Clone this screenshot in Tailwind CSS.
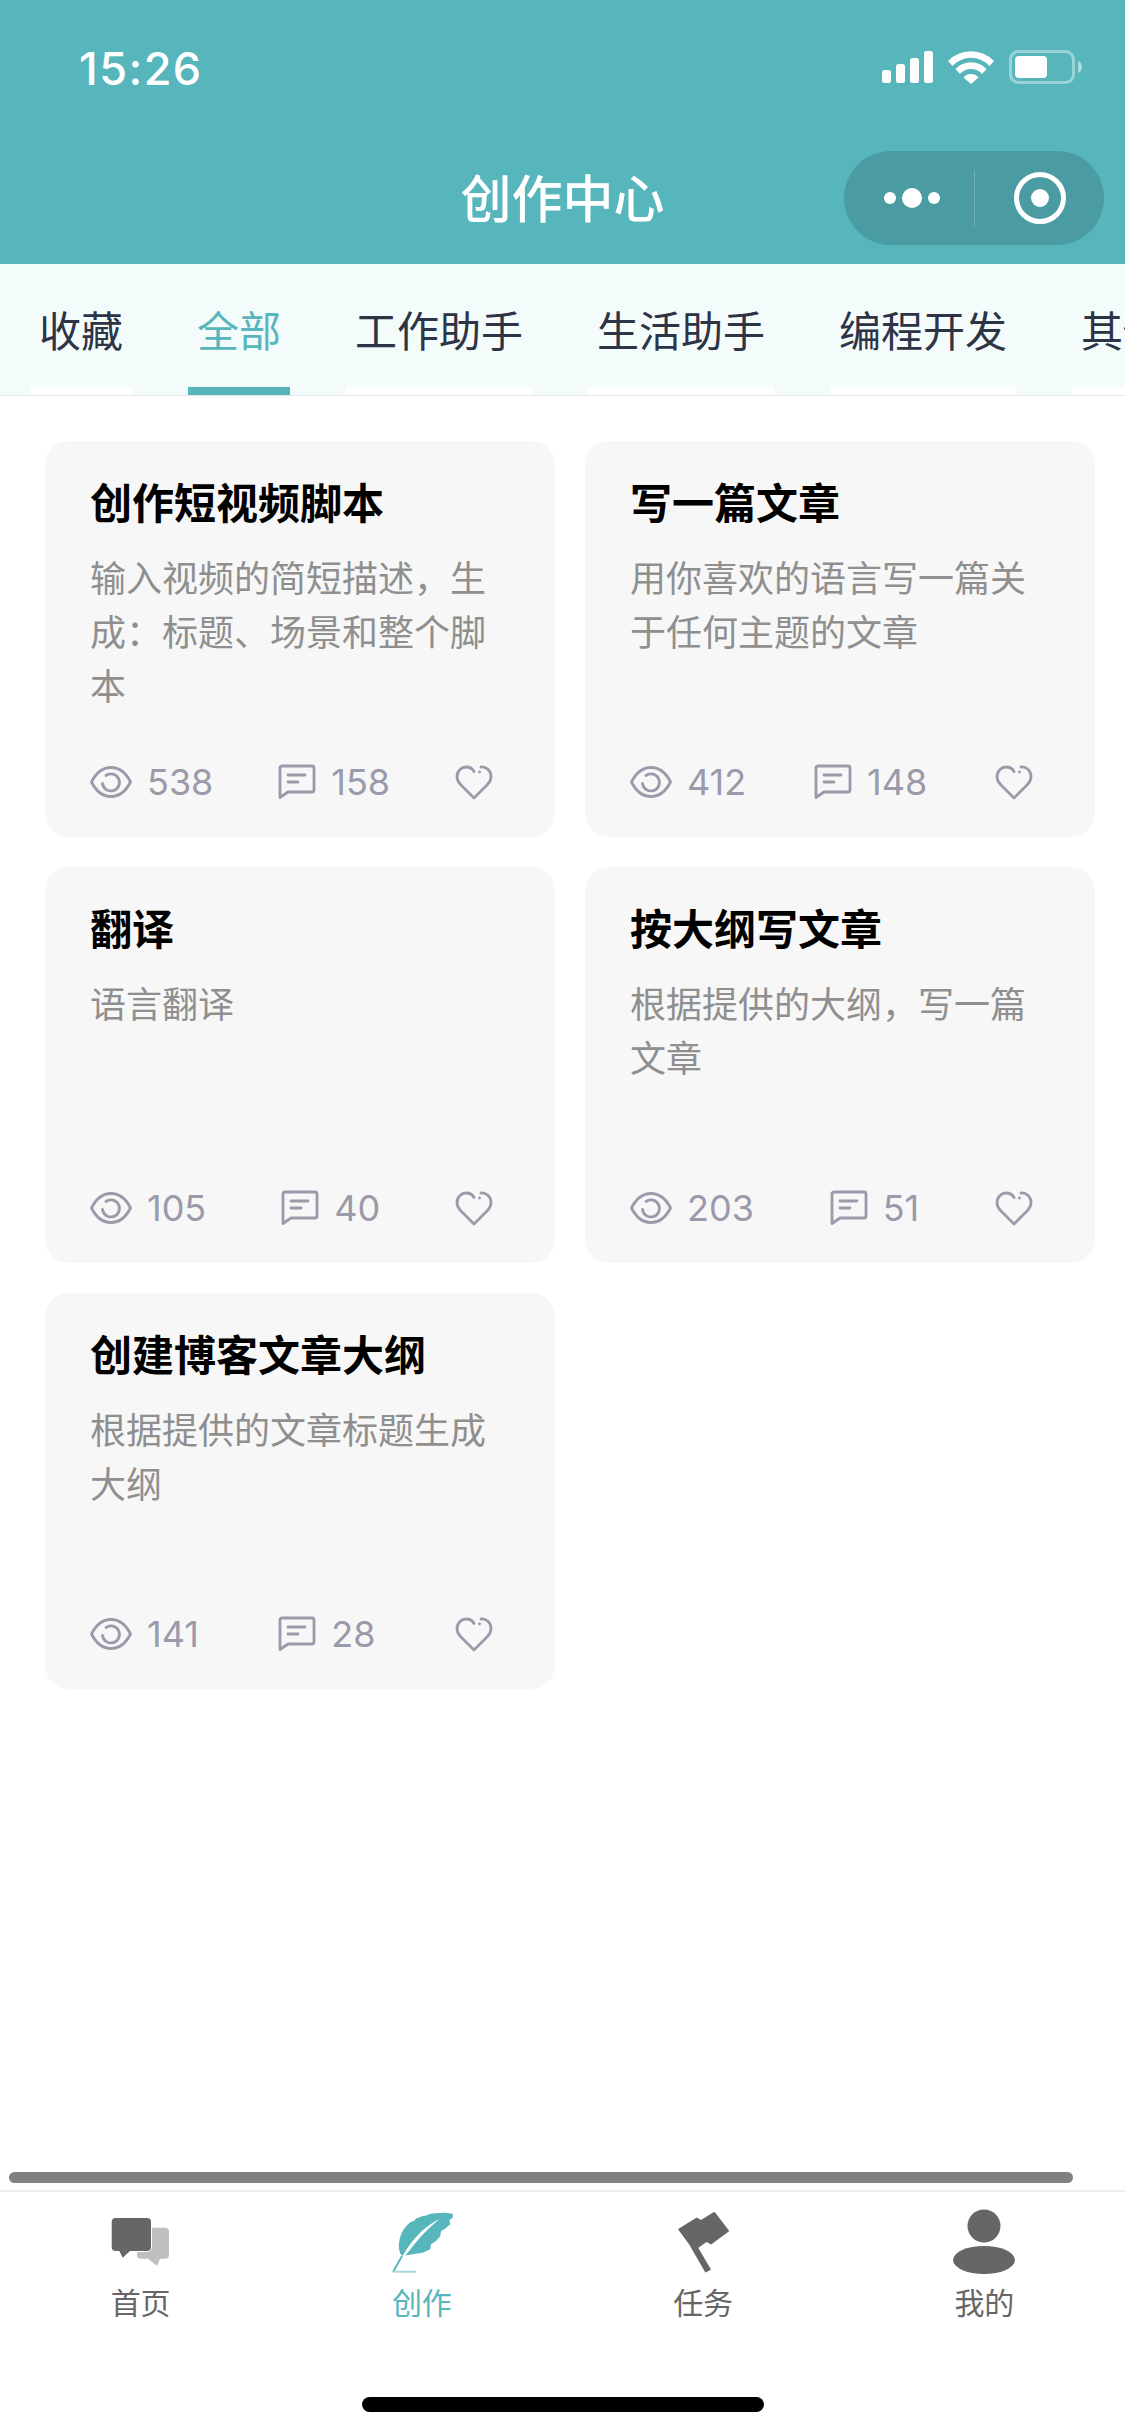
<!DOCTYPE html>
<html lang="zh">
<head>
    <meta charset="UTF-8">
    <meta name="viewport" content="width=device-width, initial-scale=1.0">
    <title>创作中心</title>
    <script src="https://cdn.jsdelivr.net/npm/@tailwindcss/browser@4"></script>
</head>
<body class="bg-white font-['Noto_Sans_CJK_SC',sans-serif]">
    <svg class="hidden">
        <symbol id="eye" viewBox="0 0 42 34">
            <path d="M1.500 17C6 8 13 2.500 21 2.500S36 8 40.500 17C36 26 29 31.500 21 31.500S6 26 1.500 17z" fill="none" stroke="currentColor" stroke-width="2.800" stroke-linejoin="round"/>
            <path d="M16 10.500a8.500 8.500 0 1 1-3.500 8" fill="none" stroke="currentColor" stroke-width="2.800" stroke-linecap="round"/>
        </symbol>
        <symbol id="comment" viewBox="0 0 38 36">
            <path d="M2 33.500V4a2 2 0 0 1 2-2h30a2 2 0 0 1 2 2v22a2 2 0 0 1-2 2H10z" fill="none" stroke="currentColor" stroke-width="2.800" stroke-linejoin="round"/>
            <path d="M10 11h17M10 18h10" fill="none" stroke="currentColor" stroke-width="2.800" stroke-linecap="round"/>
        </symbol>
        <symbol id="heart" viewBox="0 0 38 36">
            <path d="M26 3c5-.5 10 3.500 10 9.500 0 3-1 5.500-3.500 8L19 34 5.500 20.500C3 18 2 15.500 2 12.500 2 7 6.500 3 11 3c3.500 0 6.500 1.500 8 4.500" fill="none" stroke="currentColor" stroke-width="2.800" stroke-linecap="round" stroke-linejoin="round"/>
            <circle cx="24.500" cy="8" r="1.400" fill="currentColor"/>
        </symbol>
    </svg>

    <div class="w-[1125px] h-[2436px] flex flex-col overflow-hidden">
        <!-- header -->
        <div class="h-[264px] bg-[#56b6bc] text-white shrink-0">
            <div class="h-[136px] flex items-center justify-between pl-[79px] pr-[43px]">
                <span class="font-['Inter',sans-serif] text-[45px] tracking-[1.500px] font-medium pt-[2px]">15:26</span>
                <svg width="200" height="36" viewBox="0 0 200 36">
                    <rect x="0" y="20" width="9" height="13" rx="2.500" fill="#fff"/>
                    <rect x="14" y="14" width="9" height="19" rx="2.500" fill="#fff"/>
                    <rect x="28" y="8" width="9" height="25" rx="2.500" fill="#fff"/>
                    <rect x="42" y="1" width="9" height="32" rx="2.500" fill="#fff"/>
                    <path d="M66 11a32 32 0 0 1 46 0l-4.500 5a25 25 0 0 0-37 0z" fill="#fff"/>
                    <path d="M73.500 19a21 21 0 0 1 31 0l-4.500 5a14.500 14.500 0 0 0-22 0z" fill="#fff"/>
                    <path d="M81.500 27.500a10 10 0 0 1 15 0L89 34z" fill="#fff"/>
                    <rect x="128.500" y="1.500" width="63" height="31" rx="8" fill="none" stroke="#fff" stroke-opacity=".4" stroke-width="3"/>
                    <rect x="133" y="6" width="32" height="22" rx="4" fill="#fff"/>
                    <path d="M196 11c3 1 4 3.500 4 6s-1 5-4 6z" fill="#fff" fill-opacity=".5"/>
                </svg>
            </div>
            <div class="relative mt-[15px] h-[94px] flex items-center justify-center">
                <span class="text-[51px] font-medium leading-none pb-[4px]">创作中心</span>
                <div class="absolute right-[21px] top-0 w-[260px] h-[94px] rounded-full bg-[#4a9ca2]">
                    <svg width="260" height="94" viewBox="0 0 260 94">
                        <circle cx="46" cy="47" r="6" fill="#fff"/>
                        <circle cx="68" cy="47" r="10" fill="#fff"/>
                        <circle cx="90" cy="47" r="6" fill="#fff"/>
                        <path d="M130.500 19v56" stroke="#fff" stroke-opacity=".2"/>
                        <circle cx="196" cy="47" r="23.500" fill="none" stroke="#fff" stroke-width="5"/>
                        <circle cx="196" cy="47" r="9" fill="#fff"/>
                    </svg>
                </div>
            </div>
        </div>

        <!-- tabs -->
        <div class="h-[132px] shrink-0 bg-[#f4fbfb] border-b border-[#e8e8e8] flex pl-[30px] gap-[56px] overflow-hidden text-[42px] text-[#2c3445]">
            <div class="shrink-0 flex flex-col">
                <span class="h-[123px] px-[9px] pt-[6px] flex items-center leading-none">收藏</span>
                <span class="h-[8px] bg-white"></span>
            </div>
            <div class="shrink-0 flex flex-col text-[#56b6bc]">
                <span class="h-[123px] px-[9px] pt-[6px] flex items-center leading-none">全部</span>
                <span class="h-[8px] bg-[#56b6bc]"></span>
            </div>
            <div class="shrink-0 flex flex-col">
                <span class="h-[123px] px-[9px] pt-[6px] flex items-center leading-none">工作助手</span>
                <span class="h-[8px] bg-white"></span>
            </div>
            <div class="shrink-0 flex flex-col">
                <span class="h-[123px] px-[9px] pt-[6px] flex items-center leading-none">生活助手</span>
                <span class="h-[8px] bg-white"></span>
            </div>
            <div class="shrink-0 flex flex-col">
                <span class="h-[123px] px-[9px] pt-[6px] flex items-center leading-none">编程开发</span>
                <span class="h-[8px] bg-white"></span>
            </div>
            <div class="shrink-0 flex flex-col">
                <span class="h-[123px] px-[9px] pt-[6px] flex items-center leading-none">其他</span>
                <span class="h-[8px] bg-white"></span>
            </div>
        </div>

        <!-- cards -->
        <div class="flex-1 grid grid-cols-[510px_510px] auto-rows-[396px] gap-[30px] pl-[45px] pt-[45px]">
            <div class="bg-[#f7f7f7] rounded-[24px] pl-[45px] pr-[62px] pt-[37px] pb-[35px] flex flex-col">
                <h3 class="text-[42px] leading-[46px] font-bold text-black whitespace-nowrap">创作短视频脚本</h3>
                <p class="mt-[25px] -mr-[22px] text-[36px] leading-[54px] text-[#8f8f8f]">输入视频的简短描述，生成：标题、场景和整个脚本</p>
                <div class="mt-auto flex items-center justify-between h-[40px] text-[#9a9aaa] text-[36px] font-['Inter',sans-serif] font-normal">
                    <span class="flex items-center gap-[15px]"><svg class="w-[42px] h-[34px]"><use href="#eye"/></svg>538</span>
                    <span class="flex items-center gap-[15px]"><svg class="w-[38px] h-[36px]"><use href="#comment"/></svg>158</span>
                    <svg class="w-[38px] h-[36px]"><use href="#heart"/></svg>
                </div>
            </div>
            <div class="bg-[#f7f7f7] rounded-[24px] pl-[45px] pr-[62px] pt-[37px] pb-[35px] flex flex-col">
                <h3 class="text-[42px] leading-[46px] font-bold text-black whitespace-nowrap">写一篇文章</h3>
                <p class="mt-[25px] -mr-[22px] text-[36px] leading-[54px] text-[#8f8f8f]">用你喜欢的语言写一篇关于任何主题的文章</p>
                <div class="mt-auto flex items-center justify-between h-[40px] text-[#9a9aaa] text-[36px] font-['Inter',sans-serif] font-normal">
                    <span class="flex items-center gap-[15px]"><svg class="w-[42px] h-[34px]"><use href="#eye"/></svg>412</span>
                    <span class="flex items-center gap-[15px]"><svg class="w-[38px] h-[36px]"><use href="#comment"/></svg>148</span>
                    <svg class="w-[38px] h-[36px]"><use href="#heart"/></svg>
                </div>
            </div>
            <div class="bg-[#f7f7f7] rounded-[24px] pl-[45px] pr-[62px] pt-[37px] pb-[35px] flex flex-col">
                <h3 class="text-[42px] leading-[46px] font-bold text-black whitespace-nowrap">翻译</h3>
                <p class="mt-[25px] -mr-[22px] text-[36px] leading-[54px] text-[#8f8f8f]">语言翻译</p>
                <div class="mt-auto flex items-center justify-between h-[40px] text-[#9a9aaa] text-[36px] font-['Inter',sans-serif] font-normal">
                    <span class="flex items-center gap-[15px]"><svg class="w-[42px] h-[34px]"><use href="#eye"/></svg>105</span>
                    <span class="flex items-center gap-[15px]"><svg class="w-[38px] h-[36px]"><use href="#comment"/></svg>40</span>
                    <svg class="w-[38px] h-[36px]"><use href="#heart"/></svg>
                </div>
            </div>
            <div class="bg-[#f7f7f7] rounded-[24px] pl-[45px] pr-[62px] pt-[37px] pb-[35px] flex flex-col">
                <h3 class="text-[42px] leading-[46px] font-bold text-black whitespace-nowrap">按大纲写文章</h3>
                <p class="mt-[25px] -mr-[22px] text-[36px] leading-[54px] text-[#8f8f8f]">根据提供的大纲，写一篇文章</p>
                <div class="mt-auto flex items-center justify-between h-[40px] text-[#9a9aaa] text-[36px] font-['Inter',sans-serif] font-normal">
                    <span class="flex items-center gap-[15px]"><svg class="w-[42px] h-[34px]"><use href="#eye"/></svg>203</span>
                    <span class="flex items-center gap-[15px]"><svg class="w-[38px] h-[36px]"><use href="#comment"/></svg>51</span>
                    <svg class="w-[38px] h-[36px]"><use href="#heart"/></svg>
                </div>
            </div>
            <div class="bg-[#f7f7f7] rounded-[24px] pl-[45px] pr-[62px] pt-[37px] pb-[35px] flex flex-col">
                <h3 class="text-[42px] leading-[46px] font-bold text-black whitespace-nowrap">创建博客文章大纲</h3>
                <p class="mt-[25px] -mr-[22px] text-[36px] leading-[54px] text-[#8f8f8f]">根据提供的文章标题生成大纲</p>
                <div class="mt-auto flex items-center justify-between h-[40px] text-[#9a9aaa] text-[36px] font-['Inter',sans-serif] font-normal">
                    <span class="flex items-center gap-[15px]"><svg class="w-[42px] h-[34px]"><use href="#eye"/></svg>141</span>
                    <span class="flex items-center gap-[15px]"><svg class="w-[38px] h-[36px]"><use href="#comment"/></svg>28</span>
                    <svg class="w-[38px] h-[36px]"><use href="#heart"/></svg>
                </div>
            </div>
        </div>

        <!-- scrollbar -->
        <div class="h-[18px] shrink-0 pl-[9px]">
            <div class="w-[1064px] h-[11px] rounded-full bg-[#808080]"></div>
        </div>

        <!-- bottom nav -->
        <div class="h-[246px] shrink-0 border-t-2 border-[#ececec] pt-[17px] grid grid-cols-4 text-[30px] text-[#666] relative">
            <div class="flex flex-col items-center">
                <svg width="66" height="66" viewBox="0 0 66 66" class="-translate-x-[1px]">
                    <path d="M34 18.700h24a4 4 0 0 1 4 4v23a4 4 0 0 1-4 4h-5l-3 7-9-7H34a4 4 0 0 1-4-4z" fill="#bfbfbf"/>
                    <path d="M8.700 9H40a4 4 0 0 1 4 4v25a4 4 0 0 1-4 4H23l-7.300 6.700L12.300 42H8.700a4 4 0 0 1-4-4V13a4 4 0 0 1 4-4z" fill="#666" stroke="#fff" stroke-width="2" paint-order="stroke"/>
                </svg>
                <span class="mt-[5px] leading-[42px]">首页</span>
            </div>
            <div class="flex flex-col items-center text-[#56b6bc]">
                <svg width="66" height="66" viewBox="0 0 66 66">
                    <path d="M11.300 44.700C9.500 40 9.500 36 10.300 32c.7-4 1.700-7 3.400-10 2-3.500 5-6.800 8.300-9.300l3-.7 2-2.500 6.700-2.500 4-.5 2-1.300 6-1 10-.5 8 1v4l-3.400 2.600 1 4-6 5-3.300 1.700-.7 5L47 32l-5 3.300-.7 5-7.600 3.400-10 1.600-10 1.700z" fill="#56b6bc"/>
                    <path d="M13 48C22 32 34 18 50.500 10 38 20 27 32 17 46z" fill="#fff"/>
                    <path d="M13 47 4 63" stroke="#56b6bc" stroke-width="2" fill="none"/>
                    <path d="M4 62.700h23" stroke="#a5dadd" stroke-width="2" fill="none"/>
                </svg>
                <span class="mt-[5px] leading-[42px]">创作</span>
            </div>
            <div class="flex flex-col items-center">
                <svg width="66" height="66" viewBox="0 0 66 66">
                    <path d="M9 20.300 26.700 9.300 31 12 44.300 3.700 58.300 22 41 34.700 36.700 32 27.300 38.700 40 60.300 35.700 62.700 20 35.300z" fill="#666" stroke="#666" stroke-width="1.500" stroke-linejoin="round"/>
                </svg>
                <span class="mt-[5px] leading-[42px]">任务</span>
            </div>
            <div class="flex flex-col items-center">
                <svg width="66" height="66" viewBox="0 0 66 66">
                    <circle cx="33" cy="17" r="16.500" fill="#666"/>
                    <ellipse cx="33" cy="51" rx="31" ry="14" fill="#666"/>
                </svg>
                <span class="mt-[5px] leading-[42px]">我的</span>
            </div>
            <div class="absolute left-[362px] bottom-[24px] w-[402px] h-[15px] rounded-full bg-black"></div>
        </div>
    </div>
</body>
</html>
